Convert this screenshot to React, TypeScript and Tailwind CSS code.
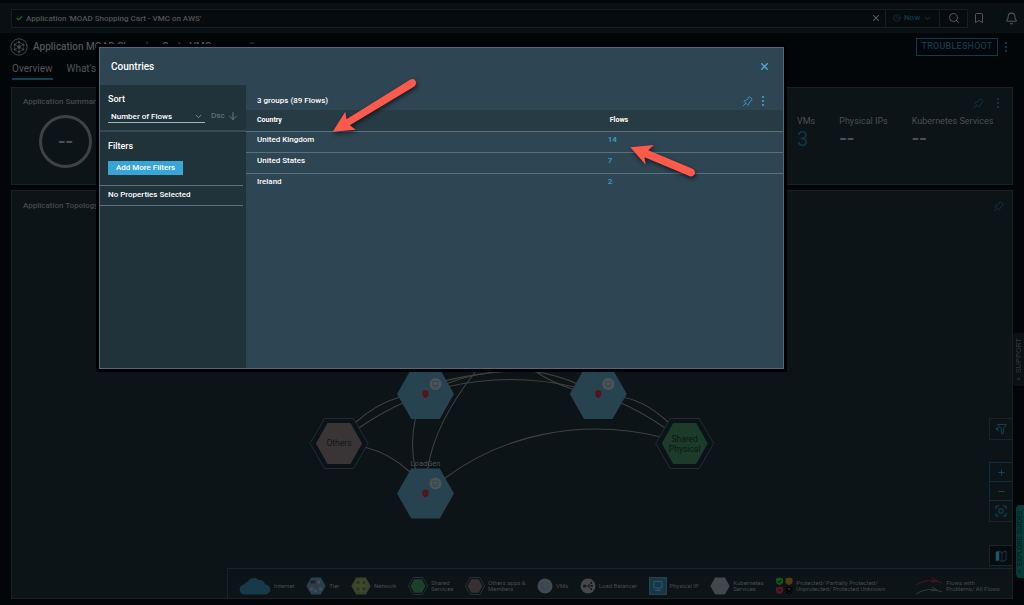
import React from "react";
import { ArrowDown, Bell, Bookmark, Check, ChevronDown, Clock, Globe, Minus, Plus, Search, X } from "lucide-react";

const hex = (cx: number, cy: number, rx: number, ry: number) =>
  [
    [cx - rx, cy],
    [cx - rx / 2, cy - ry],
    [cx + rx / 2, cy - ry],
    [cx + rx, cy],
    [cx + rx / 2, cy + ry],
    [cx - rx / 2, cy + ry],
  ]
    .map((p) => p.join(","))
    .join(" ");

function Dots({ className }: { className: string }) {
  return (
    <svg viewBox="0 0 4 12" className={"h-3 w-1 " + className} fill="currentColor" aria-hidden="true">
      <rect x="1" y="1" width="2" height="2" />
      <rect x="1" y="5" width="2" height="2" />
      <rect x="1" y="9" width="2" height="2" />
    </svg>
  );
}

function PinIcon({ className }: { className: string }) {
  return (
    <svg viewBox="0 0 11 11" className={"size-[11px] " + className} fill="none" stroke="currentColor" strokeLinejoin="round" aria-hidden="true">
      <path d="M6.300 1.300Q7.800 .2 9 1.800Q10.600 3.200 9.600 4.600L8.400 5L7 7.200Q7 8.600 6 9.300L1.900 5.200Q2.600 4.200 4.200 4.100L6.200 2.500Z" />
      <path d="M3.800 7.200L.8 10.200" />
    </svg>
  );
}

function Header() {
  return (
    <header className="mt-[3px] flex h-[30px] items-center bg-[#091013] pl-[11px] pr-1.5">
      <div className="flex h-[19px] flex-1 items-stretch border border-[#171d20] bg-[#060b0e]">
        <div className="flex flex-1 items-center gap-[3px] pl-1 pr-1">
          <Check className="size-[7px] text-[#1f6b1c]" strokeWidth={4} aria-hidden="true" />
          <input
            aria-label="Search"
            defaultValue="Application 'MOAD Shopping Cart - VMC on AWS'"
            className="h-4 flex-1 bg-transparent text-[8px] font-medium text-[#505456] outline-none"
          />
          <button aria-label="Clear search">
            <X className="size-2.5 text-[#62676a]" strokeWidth={2.5} />
          </button>
        </div>
        <button className="flex w-[54px] items-center justify-center gap-[3px] border-l border-[#171d20] text-[8px] font-medium text-[#12394b]">
          <Clock className="size-2" />
          Now
          <ChevronDown className="size-[9px]" strokeWidth={2.5} />
        </button>
        <button aria-label="Run search" className="flex w-7 items-center justify-center border-l border-[#171d20] text-[#55595b]">
          <Search className="size-3" strokeWidth={2} />
        </button>
      </div>
      <button aria-label="Bookmarks" className="ml-[5px]">
        <Bookmark className="size-3 text-[#505456]" />
      </button>
      <button aria-label="Notifications" className="ml-5">
        <Bell className="size-[13px] text-[#505456]" />
      </button>
    </header>
  );
}

function AppIcon() {
  return (
    <svg viewBox="0 0 18 18" className="size-[18px] text-[#4b4f51]" fill="none" stroke="currentColor" aria-hidden="true">
      <circle cx="9" cy="9" r="8.2" strokeWidth=".9" />
      <path d="M9 4v10M4.700 6.500l8.600 5M13.300 6.500l-8.600 5M9 4l4.300 2.500v5L9 14l-4.300-2.500v-5z" strokeWidth=".6" />
      <g fill="currentColor" stroke="none">
        <circle cx="9" cy="9" r="1.7" />
        <circle cx="9" cy="3.9" r="1" />
        <circle cx="9" cy="14.1" r="1" />
        <circle cx="4.6" cy="6.5" r="1" />
        <circle cx="13.4" cy="6.5" r="1" />
        <circle cx="4.6" cy="11.5" r="1" />
        <circle cx="13.4" cy="11.5" r="1" />
      </g>
    </svg>
  );
}

function Dashes() {
  return <span className="text-[22px] leading-6 font-medium">--</span>;
}

function Metric({ label, value, className }: { label: string; value: string; className?: string }) {
  return (
    <div className="flex flex-col">
      <dt className="text-[9px] leading-3 text-[#4b5052]">{label}</dt>
      <dd className={"flex h-6 items-center text-xl leading-6 " + (className ?? "text-[#4b5052]")}>
        {value === "--" ? <Dashes /> : value}
      </dd>
    </div>
  );
}

function SummaryCard() {
  return (
    <section className="mx-[11px] mt-[7px] flex h-[98px] justify-between border border-[#1a2124] bg-[#0c1417]">
      <div className="pl-[11px] pt-2">
        <h2 className="text-[8px] leading-3 font-medium text-[#454a4c]">Application Summary</h2>
        <div className="mt-[7px] ml-4 flex size-[53px] items-center justify-center rounded-full border-[3px] border-[#3e4244] text-[#4b5052]">
          <Dashes />
        </div>
      </div>
      <div className="flex w-[215px] flex-col pt-[9px]">
        <div className="flex h-3 items-center justify-end gap-3 pr-3 text-[#12303e]">
          <button aria-label="Pin summary"><PinIcon className="" /></button>
          <button aria-label="Summary options"><Dots className="" /></button>
        </div>
        <dl className="mt-1.5 flex gap-6">
          <Metric label="VMs" value="3" className="text-[#103445]" />
          <Metric label="Physical IPs" value="--" />
          <Metric label="Kubernetes Services" value="--" />
        </dl>
      </div>
    </section>
  );
}

function Tier({ x, y }: { x: number; y: number }) {
  return (
    <g>
      <polygon points={hex(x, y, 28.5, 25)} fill="#274350" />
      <circle cx={x + 10} cy={y - 10} r="6" fill="#4e5356" />
      <rect x={x + 7.4} y={y - 12.5} width="5.2" height="4" fill="none" stroke="#2a4655" strokeWidth=".9" />
      <path d={`M${x + 8} ${y - 7}h4`} stroke="#2a4655" strokeWidth=".9" />
      <path d={`M${x - 3} ${y - 3}L${x} ${y - 4}L${x + 3} ${y - 3}V${y}Q${x + 3} ${y + 3} ${x} ${y + 4}Q${x - 3} ${y + 3} ${x - 3} ${y}Z`} fill="#5b1019" />
      <path d={`M${x - 1.3} ${y - 1.5}l2.6 2.8m0-2.8l-2.6 2.8`} stroke="#1a3039" strokeWidth=".8" />
    </g>
  );
}

function Topology() {
  return (
    <svg viewBox="12 192 1000 405" className="absolute inset-0 h-full w-full" role="img" aria-label="Application topology">
      <g fill="none" stroke="#3d4142" strokeWidth="1.1">
        <path d="M356 422Q376 404 400 397Q445 375 512 371" />
        <path d="M359 428Q382 412 403 403" />
        <path d="M366 447.500Q389 453 410 472" />
        <path d="M415.500 418Q409.500 444 415.500 470" />
        <path d="M427.500 470Q434 424 476 371" />
        <path d="M444 479C500 436 580 417 661 437" />
        <path d="M446 384Q475 372 510 371" />
        <path d="M446 387Q510 372 575 387" />
        <path d="M530 371Q556 374 580 385" />
        <path d="M535 371Q550 382 575 390" />
        <path d="M624 397.500Q647 402 669 423" />
        <path d="M621 403Q642 412 665 428" />
      </g>
      <Tier x={425.5} y={394} />
      <Tier x={598.3} y={394} />
      <Tier x={425.5} y={493.5} />
      <text x="425.5" y="466" textAnchor="middle" fontSize="7.5" fill="#4b5052">LoadGen</text>
      <polygon points={hex(339, 443.5, 29, 25)} fill="#0a1317" stroke="#242c2f" />
      <polygon points={hex(339, 443.5, 23, 20.5)} fill="#393536" />
      <text x="339" y="446" textAnchor="middle" fontSize="8.5" fill="#101517">Others</text>
      <polygon points={hex(684.7, 443.5, 29, 25)} fill="#0a1317" stroke="#242c2f" />
      <polygon points={hex(684.7, 443.5, 23, 20.5)} fill="#1d3b2b" />
      <text textAnchor="middle" fontSize="8.5" fill="#0b1714">
        <tspan x="684.7" y="442">Shared</tspan>
        <tspan x="684.7" y="452">Physical</tspan>
      </text>
    </svg>
  );
}

function LegendHex({ fill, ring }: { fill: string; ring?: boolean }) {
  return (
    <svg viewBox="0 0 20 18" className="h-[18px] w-5" aria-hidden="true">
      {ring && <polygon points={hex(10, 9, 9.5, 8.5)} fill="none" stroke="#2d3538" strokeWidth=".8" />}
      <polygon points={ring ? hex(10, 9, 7.5, 6.8) : hex(10, 9, 9.7, 8.6)} fill={fill} />
    </svg>
  );
}

function LegendItem({ icon, lines }: { icon: React.ReactNode; lines: string[] }) {
  return (
    <li className="flex items-center gap-[3px] text-[6px] leading-[6px] whitespace-nowrap text-[#474c4e]">
      {icon}
      <span>
        {lines.map((l) => (
          <span key={l} className="block">{l}</span>
        ))}
      </span>
    </li>
  );
}

function Legend() {
  return (
    <ul className="relative ml-auto flex h-[30px] w-[785px] items-center justify-between border-t border-l border-[#192226] bg-[#0c1417] pt-1 pr-3 pl-[11px]">
      <LegendItem
        lines={["Internet"]}
        icon={
          <svg viewBox="0 0 32 18" className="h-[18px] w-8" fill="#18394a" aria-hidden="true">
            <path d="M6 17.500a5 5 0 0 1-.5-10.200A4.500 4.500 0 0 1 9 4.500 7 7 0 0 1 20 3a5 5 0 0 1 6 4.500 5 5 0 0 1 .5 10z" />
          </svg>
        }
      />
      <LegendItem
        lines={["Tier"]}
        icon={
          <svg viewBox="0 0 20 18" className="h-[18px] w-5" aria-hidden="true">
            <polygon points={hex(10, 9, 9.7, 8.6)} fill="#2b404c" />
            <rect x="4.5" y="3.5" width="5" height="3" rx="1" fill="#15242c" />
            <circle cx="13" cy="5" r="1.5" fill="#46535a" />
            <circle cx="5.5" cy="12" r="1.5" fill="#46535a" />
            <circle cx="14.5" cy="12" r="1.5" fill="#46535a" />
            <circle cx="9.5" cy="14" r="1.2" fill="#46535a" />
            <circle cx="10" cy="9" r="1.3" fill="#6a2029" />
          </svg>
        }
      />
      <LegendItem
        lines={["Network"]}
        icon={
          <svg viewBox="0 0 20 18" className="h-[18px] w-5" aria-hidden="true">
            <polygon points={hex(10, 9, 9.7, 8.6)} fill="#3a4329" />
            <path d="M5 3.500h4v4H5zM11 3.500h4v4h-4zM5 10h4v4H5zM11 10h4v4h-4zM10 2v14M3 9h14" fill="#2c3520" stroke="#4a5133" strokeWidth=".6" />
          </svg>
        }
      />
      <LegendItem icon={<LegendHex fill="#1d402a" ring />} lines={["Shared", "Services"]} />
      <LegendItem icon={<LegendHex fill="#373030" ring />} lines={["Others apps &", "Members"]} />
      <LegendItem
        lines={["VMs"]}
        icon={
          <svg viewBox="0 0 16 16" className="size-4" aria-hidden="true">
            <circle cx="8" cy="8" r="7.5" fill="#44494c" />
            <path d="M4.500 5h7v5h-7zM6 12h4" fill="none" stroke="#244a5e" strokeWidth="1.2" />
          </svg>
        }
      />
      <LegendItem
        lines={["Load Balancer"]}
        icon={
          <svg viewBox="0 0 16 16" className="size-4" aria-hidden="true">
            <circle cx="8" cy="8" r="7.5" fill="#454748" />
            <path d="M4 8h4M8 8l3-3M8 8h4M8 8l3 3" stroke="#15191b" strokeWidth=".9" />
            <circle cx="4.5" cy="8" r="1.5" fill="#15191b" />
            <circle cx="11.3" cy="4.8" r="1" fill="#15191b" />
            <circle cx="12" cy="8" r="1" fill="#15191b" />
            <circle cx="11.3" cy="11.2" r="1" fill="#15191b" />
          </svg>
        }
      />
      <LegendItem
        lines={["Physical IP"]}
        icon={
          <svg viewBox="0 0 18 18" className="size-[18px]" aria-hidden="true">
            <rect x=".5" y=".5" width="17" height="17" fill="#15394a" stroke="#2f3f46" />
            <path d="M5 4.500h8v6.500H5zM9 11v2.500M6 13.500h6" fill="none" stroke="#375462" />
          </svg>
        }
      />
      <LegendItem icon={<LegendHex fill="#43484c" />} lines={["Kubernetes", "Services"]} />
      <LegendItem
        lines={["Protected/ Partially Protected/", "Unprotected/ Protected Unknown"]}
        icon={
          <svg viewBox="0 0 18 18" className="size-[18px]" fill="none" aria-hidden="true">
            <path d="M1 1.500l3.500-1 3.500 1v3q0 2.500-3.500 3.500Q1 7 1 4.500z" fill="#12551b" />
            <path d="M2.800 4l1.300 1.500 2.300-2.700" stroke="#0c1417" />
            <path d="M10.500 1.500l3.500-1 3.500 1v3q0 2.500-3.500 3.500-3.500-1-3.500-3.500z" fill="#573a10" />
            <path d="M1 10.500l3.500-1 3.500 1v3q0 2.500-3.500 3.500Q1 16 1 13.500z" fill="#5a1620" />
            <path d="M3 11.500l3 3m0-3l-3 3" stroke="#0c1417" strokeWidth=".8" />
            <path d="M10.500 10.500l3.500-1 3.500 1v3q0 2.500-3.500 3.500-3.500-1-3.500-3.500z" fill="#020405" />
            <path d="M13 12q1-1.500 2 0-.2 1-1 1.500M14 15v.7" stroke="#54585a" strokeWidth=".7" />
          </svg>
        }
      />
      <li className="w-2" aria-hidden="true" />
      <LegendItem
        lines={["Flows with", "Problems/ All Flows"]}
        icon={
          <svg viewBox="0 0 27 18" className="h-[18px] w-[27px]" fill="none" aria-hidden="true">
            <path d="M0 8Q12 0 26 6M16 1l5 3-6 1" stroke="#4a161d" />
            <path d="M0 17Q12 9 26 15M16 10l5 3-6 1" stroke="#34393b" />
          </svg>
        }
      />
    </ul>
  );
}

function CanvasControls() {
  return (
    <div className="absolute right-0 bottom-8 flex w-[23px] flex-col text-[#174358]">
      <button aria-label="Filter topology" className="flex h-[22px] items-center justify-center border border-r-0 border-[#1a2428]">
        <svg viewBox="0 0 12 12" className="size-3" fill="none" stroke="currentColor" strokeWidth=".9" strokeLinejoin="round" aria-hidden="true">
          <path d="M2.500 1.500h9L8.500 5.500V10L6.500 11V6z" />
          <path d="M1 6l1.800-1.500v3z" fill="currentColor" />
        </svg>
      </button>
      <div className="mt-[22px] flex flex-col border border-r-0 border-[#0f2e3c]">
        <button aria-label="Zoom in" className="flex h-[19px] items-center justify-center border-b border-[#0f2e3c]">
          <Plus className="size-[9px]" strokeWidth={3} />
        </button>
        <button aria-label="Zoom out" className="flex h-[18px] items-center justify-center">
          <Minus className="size-[9px]" strokeWidth={3} />
        </button>
      </div>
      <button aria-label="Fit to screen" className="flex h-[21px] items-center justify-center border border-t-0 border-r-0 border-[#1a2428]">
        <svg viewBox="0 0 12 12" className="size-3" fill="none" stroke="currentColor" aria-hidden="true">
          <path d="M1 4V1h3M8 1h3v3M11 8v3H8M4 11H1V8M4 4h4v4H4z" />
        </svg>
      </button>
      <button aria-label="Toggle legend" className="mt-[23px] flex h-[21px] items-center justify-center border border-r-0 border-[#1a2428] bg-[#060b0e]">
        <svg viewBox="0 0 12 12" className="size-3" fill="none" stroke="currentColor" strokeWidth=".8" aria-hidden="true">
          <path d="M1 2l3-1v9l-3 1z" fill="#265a72" />
          <path d="M4 1l3 1.500v9L4 10M7 2.500L11 1v9l-4 1.500" />
        </svg>
      </button>
    </div>
  );
}

function TopologyCard() {
  return (
    <section className="relative mx-[11px] mt-[5px] mb-[6px] flex flex-1 flex-col border border-[#1a2124] bg-[#0c1417]">
      <div className="flex items-center justify-between pt-[9px] pr-2 pl-[11px]">
        <h2 className="text-[8px] leading-3 font-medium text-[#454a4c]">Application Topology</h2>
        <button aria-label="Pin topology"><PinIcon className="text-[#12303e]" /></button>
      </div>
      <Topology />
      <div className="flex-1" />
      <CanvasControls />
      <Legend />
    </section>
  );
}

const countries = [
  { name: "United Kingdom", flows: 14 },
  { name: "United States", flows: 7 },
  { name: "Ireland", flows: 2 },
];

function CountriesDialog() {
  return (
    <div className="absolute inset-x-0 top-0 pt-[47px] pr-[240px] pl-[99px]">
      <div
        role="dialog"
        aria-labelledby="dialog-title"
        className="relative flex min-h-[322px] flex-col border border-[#4b6b80] bg-[#2e4553] text-white ring-3 ring-black"
      >
        <div className="flex h-[37px] items-center justify-between pr-[13px] pl-[11px]">
          <h2 id="dialog-title" className="text-[10px] font-medium">Countries</h2>
          <button aria-label="Close">
            <X className="size-[11px] text-[#49afd9]" strokeWidth={3} />
          </button>
        </div>
        <div className="flex flex-1">
          <aside className="w-[146px] bg-[#20323a]">
            <div className="h-[47px] border-b-2 border-[#344b58] pt-2 pl-2">
              <label htmlFor="sort" className="block text-[9px] leading-3 font-medium">Sort</label>
              <div className="mt-[3px] flex items-center gap-1.5">
                <div className="relative w-[97px]">
                  <select
                    id="sort"
                    className="block h-[15px] w-full appearance-none border-b border-[#a3b1b8] bg-transparent pt-[3px] pl-[3px] text-[8px] font-medium outline-none"
                  >
                    <option>Number of Flows</option>
                  </select>
                  <ChevronDown className="pointer-events-none absolute top-1 right-0.5 size-[9px] text-[#9aa9b0]" />
                </div>
                <button className="flex items-center gap-0.5 text-[8px] text-[#6f7f87]">
                  Dsc
                  <ArrowDown className="size-3" strokeWidth={1.8} />
                </button>
              </div>
            </div>
            <div className="h-[53px] pt-2 pl-2">
              <h3 className="text-[9px] leading-3 font-medium">Filters</h3>
              <button className="mt-[9px] flex h-[14px] w-[75px] items-center justify-center bg-[#37a5d8] text-[8px] font-medium whitespace-nowrap">
                Add More Filters
              </button>
            </div>
            <p className="mr-[3px] flex h-[21px] items-center border-y border-[#5b707b] pb-0.5 pl-2 text-[8px] font-medium">
              No Properties Selected
            </p>
          </aside>
          <div className="flex-1">
            <div className="flex h-[25px] items-end justify-between pr-[18px] pb-[3px] pl-[11px]">
              <p className="text-[8px] leading-3 font-medium">3 groups (89 Flows)</p>
              <div className="flex items-center gap-2 text-[#3b93bb]">
                <button aria-label="Pin"><PinIcon className="" /></button>
                <button aria-label="More options"><Dots className="" /></button>
              </div>
            </div>
            <table className="w-full table-fixed border-collapse text-left text-[8px]">
              <thead>
                <tr className="h-[21px] bg-[#273b45] text-[7px]">
                  <th scope="col" className="w-[67%] p-0 pl-[11px] font-bold">Country</th>
                  <th scope="col" className="p-0 pl-1 font-bold">Flows</th>
                </tr>
              </thead>
              <tbody>
                {countries.map((c) => (
                  <tr key={c.name} className="h-[21px] border-t border-[#59717f]">
                    <td className="p-0 pb-[3px] pl-[11px] font-medium">{c.name}</td>
                    <td className="p-0 pb-[3px] pl-0.5 font-medium">
                      <a href="#flows" className="text-[#3f9fca]">{c.flows}</a>
                    </td>
                  </tr>
                ))}
              </tbody>
            </table>
          </div>
        </div>
      </div>
    </div>
  );
}

function Arrows() {
  return (
    <div className="pointer-events-none absolute top-0 left-0 drop-shadow-[1px_2px_2px_rgba(0,0,0,0.6)]">
      <svg viewBox="320 70 385 120" className="mt-[70px] ml-[320px] h-[120px] w-[385px]" fill="#fe5a4b" aria-hidden="true">
        <path d="M332.700 131.700L345.300 111.700L346.500 119.300L410.500 79.500Q414 78.200 415.800 81.200Q417 84.500 414.300 86.500L349.800 125.300L355.800 129.800Z" />
        <path d="M630.300 147.300L653.700 145L648.300 150.200L692.600 168.800Q695.800 170.800 694.800 174Q693.200 177 690 176.300L644.500 157.200L645.700 164.700Z" />
      </svg>
    </div>
  );
}

export default function App() {
  return (
    <div className="relative flex min-h-screen flex-col overflow-hidden bg-[#030608] font-['Roboto','Liberation_Sans',sans-serif]">
      <Header />
      <div className="flex h-[27px] items-center pr-4 pl-2.5">
        <AppIcon />
        <h1 className="ml-[5px] text-[10px] font-medium text-[#505456]">Application MOAD Shopping Cart - VMC</h1>
        <Globe className="ml-9 size-2.5 text-[#12394b]" aria-hidden="true" />
        <button className="ml-auto h-[18px] w-[82px] border border-[#12394b] text-[9px] font-medium tracking-wide text-[#12394b]">
          TROUBLESHOOT
        </button>
        <button aria-label="More actions" className="ml-1.5"><Dots className="text-[#12394b]" /></button>
      </div>
      <nav className="flex h-5 gap-[14px] pl-3 text-[10px] leading-[18px] text-[#505456]">
        <a href="#overview" className="border-b-2 border-[#123e50]">Overview</a>
        <a href="#whats-new">What's</a>
      </nav>
      <SummaryCard />
      <TopologyCard />
      <button className="absolute top-[333px] right-0 flex h-[53px] w-[11px] rotate-180 items-center justify-center gap-1 rounded-r bg-[#0c1114] text-[8px] leading-[11px] text-[#34393b] [writing-mode:vertical-rl]">
        <span>«</span>
        <span>SUPPORT</span>
      </button>
      <button className="absolute top-[505px] right-0 flex h-[73px] w-2 rotate-180 items-center justify-center gap-1 rounded-r bg-[#083a38] text-[7px] leading-[8px] font-medium whitespace-nowrap text-[#05211f] [writing-mode:vertical-rl]">
        <span>«</span>
        <span>EXPLORE GUIDES</span>
      </button>
      <CountriesDialog />
      <Arrows />
    </div>
  );
}
